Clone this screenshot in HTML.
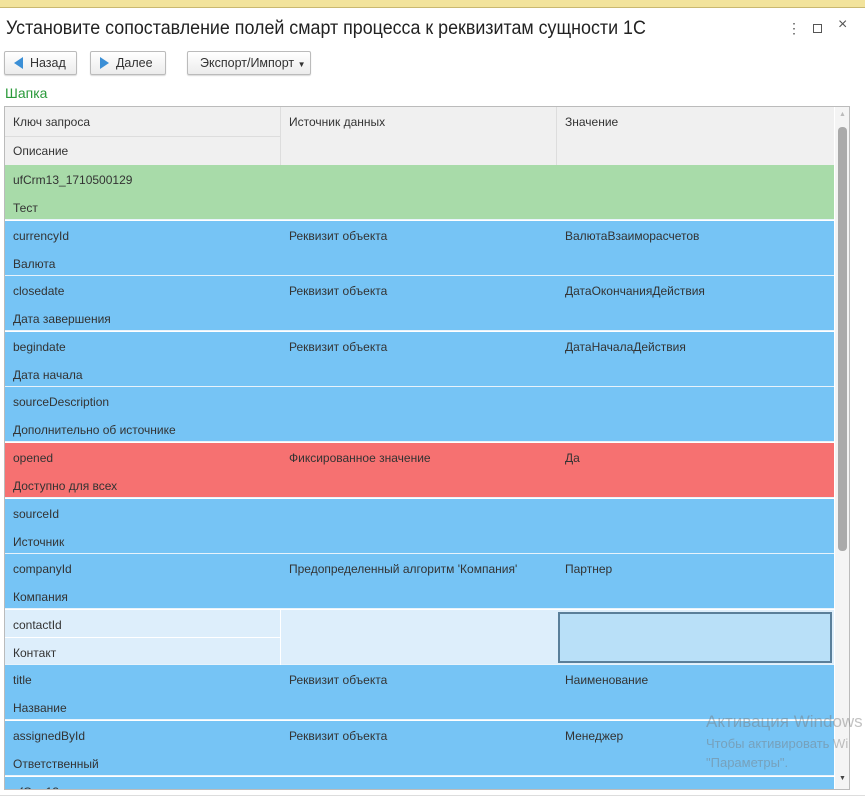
<!DOCTYPE html>
<html><head><meta charset="utf-8"><style>
*{box-sizing:border-box;margin:0;padding:0}
body{width:865px;height:800px;overflow:hidden;background:#fff;font-family:"Liberation Sans",Arial,sans-serif;position:relative;color:#333}
.top{position:absolute;left:0;top:0;width:865px;height:8px;background:#f2e39c;border-bottom:1px solid #c9b870}
.title{position:absolute;left:6px;top:18px;font-size:19px;color:#222;transform:scaleX(0.94);transform-origin:0 0;white-space:nowrap}
.btn{position:absolute;top:51px;height:24px;border:1px solid #bbb;border-radius:2px;background:linear-gradient(#fff,#ececec);font-size:12.5px;line-height:22px;color:#333;box-shadow:0 1px 1px rgba(0,0,0,.15)}
.arr{display:inline-block;width:0;height:0;border-top:6px solid transparent;border-bottom:6px solid transparent;vertical-align:-2px}
.sh{position:absolute;left:5px;top:85px;font-size:14px;color:#2a9a3a}
.grid{position:absolute;left:4px;top:106px;width:846px;height:684px;border:1px solid #bbb;overflow:hidden}
.c{position:absolute;font-size:12px;line-height:14px;color:#333;white-space:nowrap}
.row{position:absolute;left:0;width:829px;height:55px;border-bottom:1px solid #e8f3fb}
.sb{position:absolute;left:830px;top:0;width:15px;height:684px;background:#f4f4f4}
</style></head><body>
<div class="top"></div>
<div class="title">Установите сопоставление полей смарт процесса к реквизитам сущности 1С</div>
<div style="position:absolute;left:787px;top:20px;font-size:14px;color:#555">&#8942;</div>
<div style="position:absolute;left:813px;top:24px;width:9px;height:9px;border:1px solid #555"></div>
<div style="position:absolute;left:838px;top:16px;font-size:16px;color:#555">&#215;</div>
<div class="btn" style="left:4px;width:73px;padding-left:9px"><span class="arr" style="border-right:9px solid #3b8fd6"></span>&nbsp; Назад</div>
<div class="btn" style="left:90px;width:76px;padding-left:9px"><span class="arr" style="border-left:9px solid #3b8fd6"></span>&nbsp; Далее</div>
<div class="btn" style="left:187px;width:124px;padding-left:12px">Экспорт/Импорт <span style="font-size:8px">&#9660;</span></div>
<div class="sh">Шапка</div>
<div class="grid">
<div style="position:absolute;left:0;top:0;width:829px;height:58px;background:#f0f0f0"></div>
<div style="position:absolute;left:275px;top:0;width:1px;height:58px;background:#ddd"></div>
<div style="position:absolute;left:551px;top:0;width:1px;height:58px;background:#ddd"></div>
<div style="position:absolute;left:0;top:29px;width:275px;height:1px;background:#ddd"></div>
<div class="c" style="left:8px;top:8px">Ключ запроса</div>
<div class="c" style="left:8px;top:37px">Описание</div>
<div class="c" style="left:284px;top:8px">Источник данных</div>
<div class="c" style="left:560px;top:8px">Значение</div>
<div id="rows"></div>
<div class="sb"><div style="position:absolute;left:3px;top:20px;width:9px;height:424px;background:#aaa;border-radius:4px"></div>
<div style="position:absolute;left:4px;top:4px;font-size:7px;color:#bbb">&#9650;</div>
<div style="position:absolute;left:4px;top:668px;font-size:7px;color:#444">&#9660;</div></div>
</div>
<div style="position:absolute;left:706px;top:712px;font-size:17px;color:rgba(120,120,120,.45)">Активация Windows</div>
<div style="position:absolute;left:706px;top:736px;font-size:13px;color:rgba(120,120,120,.45)">Чтобы активировать Wi</div>
<div style="position:absolute;left:706px;top:755px;font-size:13px;color:rgba(120,120,120,.45)">"Параметры".</div>
<div style="position:absolute;left:0;top:795px;width:865px;height:1px;background:#ddd"></div>
<script>
var d=[["ufCrm13_1710500129","Тест","","","#a8dba9"],
["currencyId","Валюта","Реквизит объекта","ВалютаВзаиморасчетов","#76c4f5"],
["closedate","Дата завершения","Реквизит объекта","ДатаОкончанияДействия","#76c4f5"],
["begindate","Дата начала","Реквизит объекта","ДатаНачалаДействия","#76c4f5"],
["sourceDescription","Дополнительно об источнике","","","#76c4f5"],
["opened","Доступно для всех","Фиксированное значение","Да","#f67171"],
["sourceId","Источник","","","#76c4f5"],
["companyId","Компания","Предопределенный алгоритм 'Компания'","Партнер","#76c4f5"],
["contactId","Контакт","","","#ddeefb"],
["title","Название","Реквизит объекта","Наименование","#76c4f5"],
["assignedById","Ответственный","Реквизит объекта","Менеджер","#76c4f5"],
["ufCrm13_...","","","","#76c4f5"]];
var h="";for(var i=0;i<d.length;i++){var t=58+i*55.6;var r=d[i];
h+='<div class="row" style="top:'+t+'px;background:'+r[4]+'"></div>';
if(i==8){h+='<div style="position:absolute;left:0;top:'+(t+27)+'px;width:275px;height:1px;background:#fff"></div><div style="position:absolute;left:275px;top:'+t+'px;width:1px;height:55px;background:#fff"></div><div style="position:absolute;left:553px;top:'+(t+2)+'px;width:274px;height:51px;background:#b9e0f8;border:2px solid #5a7f9a"></div>';}
h+='<div class="c" style="left:8px;top:'+(t+8)+'px">'+r[0]+'</div><div class="c" style="left:8px;top:'+(t+36)+'px">'+r[1]+'</div><div class="c" style="left:284px;top:'+(t+8)+'px">'+r[2]+'</div><div class="c" style="left:560px;top:'+(t+8)+'px">'+r[3]+'</div>';}
document.getElementById("rows").innerHTML=h;
</script>
</body></html>
